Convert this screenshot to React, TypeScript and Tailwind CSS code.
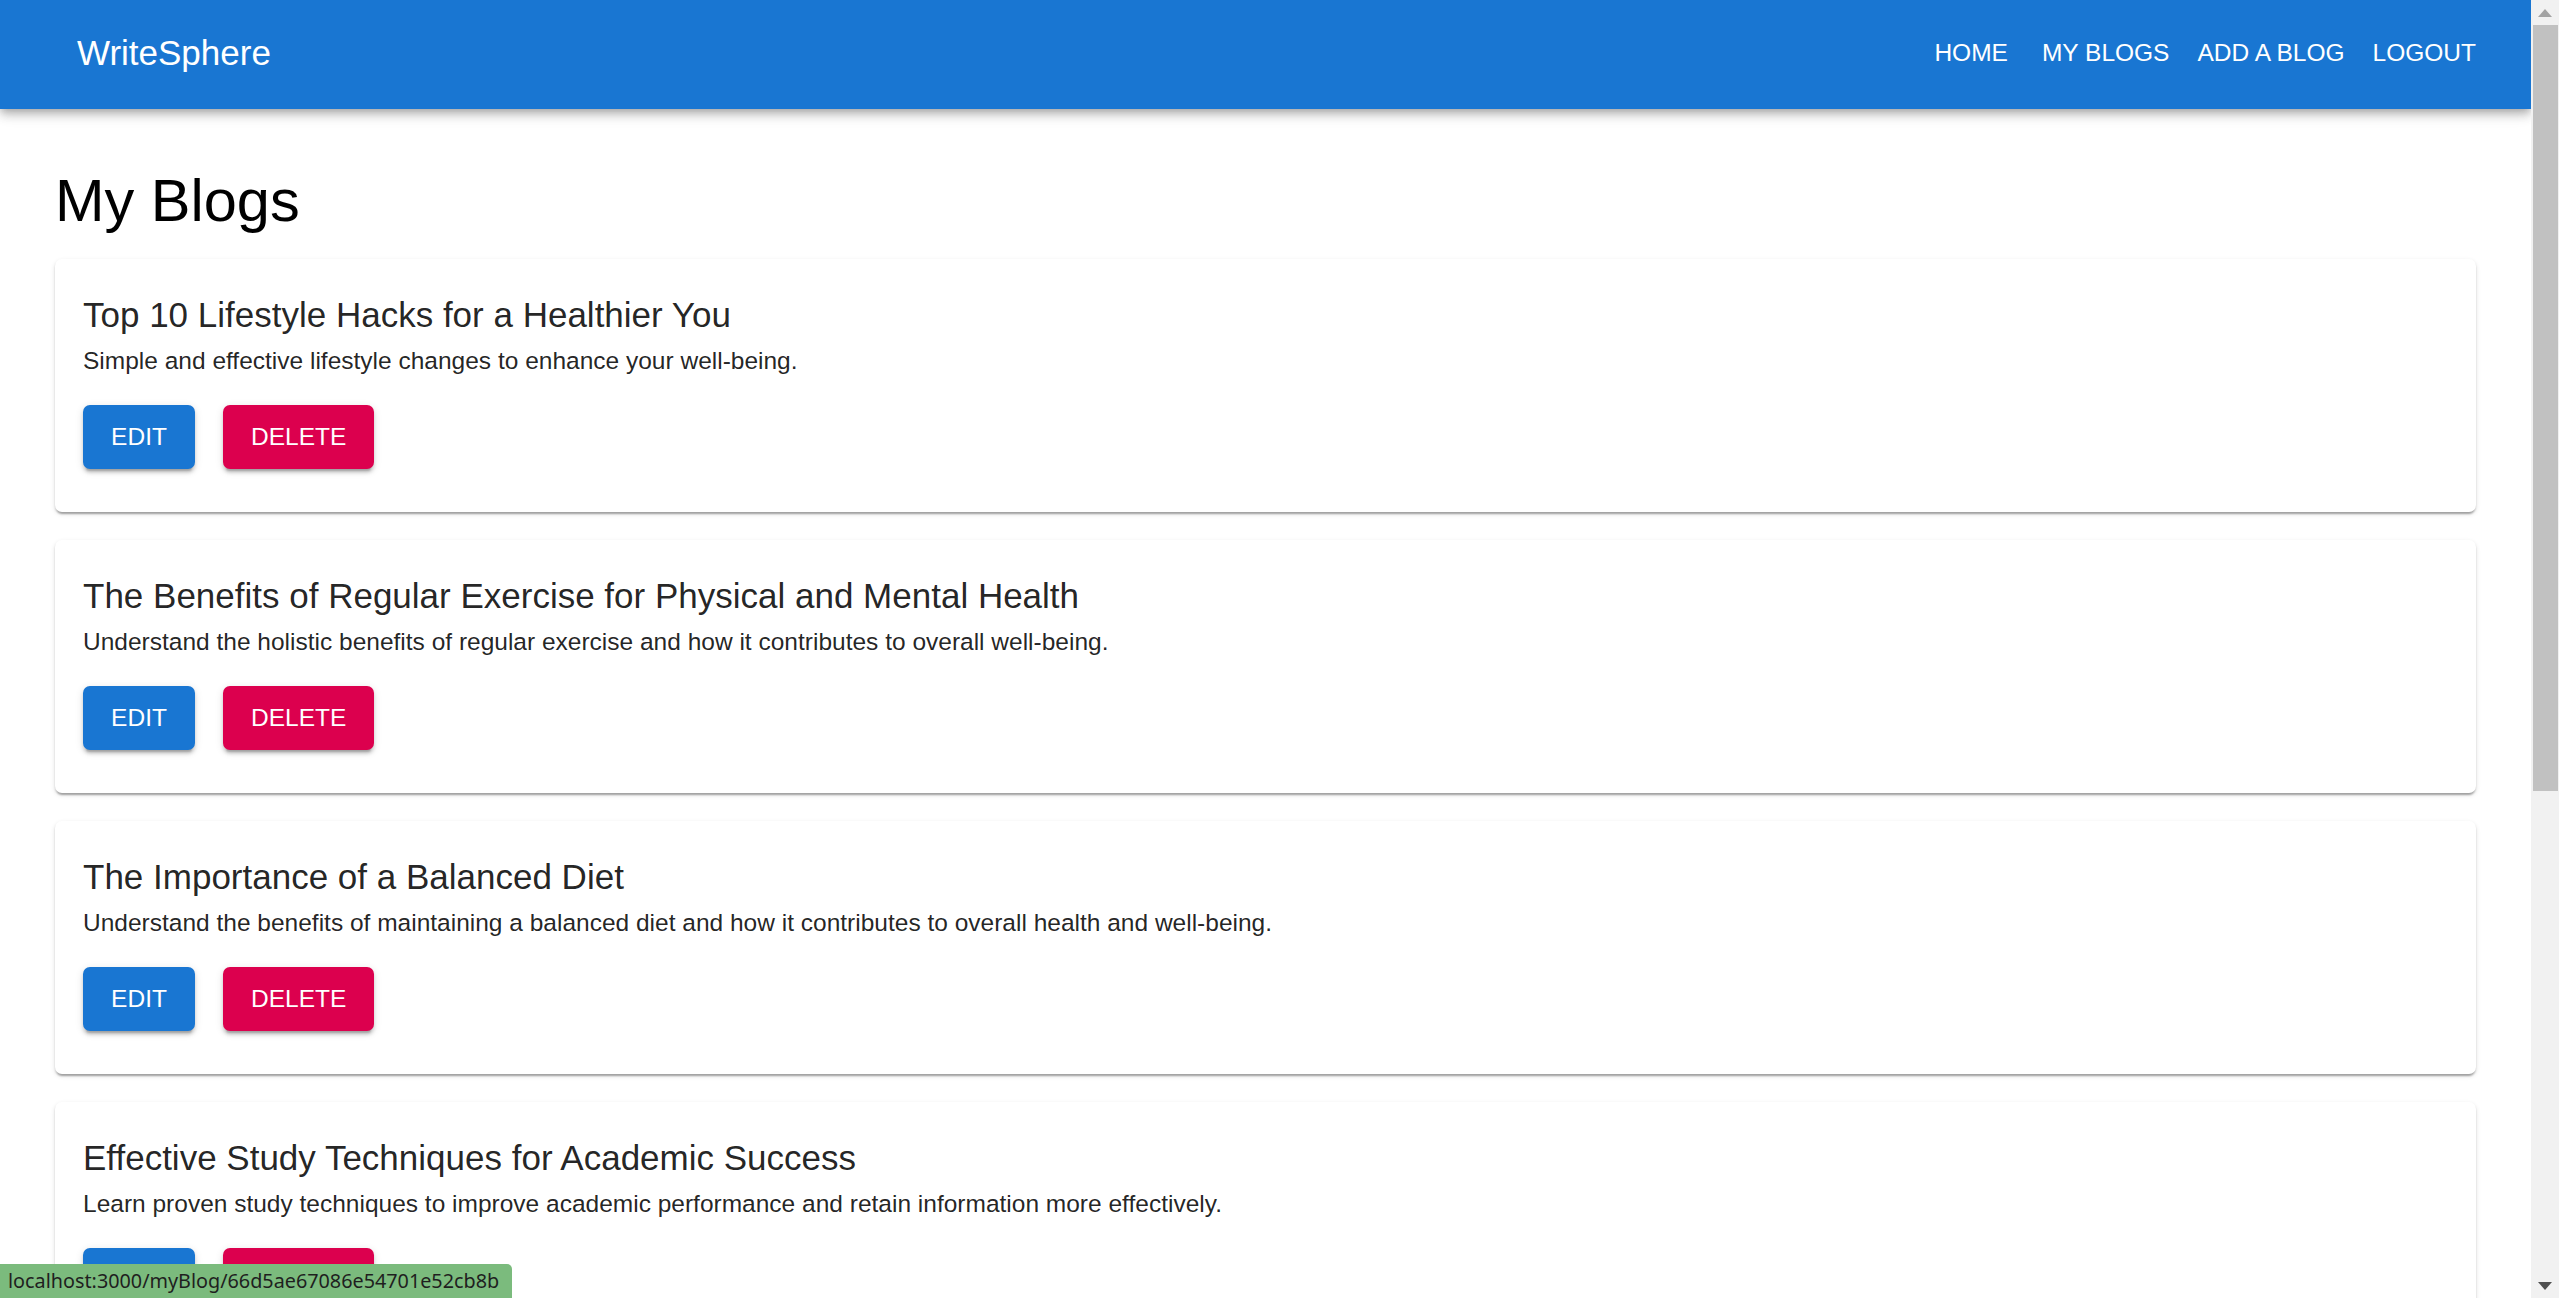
const NAV = ['Home', 'My Blogs', 'Add a Blog', 'Logout'];

const BLOGS = [
  {
    id: '66d5ae67086e54701e52cb8b',
    title: 'Top 10 Lifestyle Hacks for a Healthier You',
    description: 'Simple and effective lifestyle changes to enhance your well-being.',
  },
  {
    id: '66d5ae67086e54701e52cb8c',
    title: 'The Benefits of Regular Exercise for Physical and Mental Health',
    description:
      'Understand the holistic benefits of regular exercise and how it contributes to overall well-being.',
  },
  {
    id: '66d5ae67086e54701e52cb8d',
    title: 'The Importance of a Balanced Diet',
    description:
      'Understand the benefits of maintaining a balanced diet and how it contributes to overall health and well-being.',
  },
  {
    id: '66d5ae67086e54701e52cb8e',
    title: 'Effective Study Techniques for Academic Success',
    description:
      'Learn proven study techniques to improve academic performance and retain information more effectively.',
  },
];

function BlogCard({ title, description }: { title: string; description: string }) {
  return (
    <div className="rounded-[7px] bg-white px-[28px] pt-[28px] pb-[43px] shadow-[0_3.5px_2px_-2px_rgba(0,0,0,0.2),0_2px_2px_0_rgba(0,0,0,0.14),0_2px_5px_0_rgba(0,0,0,0.12)]">
      <h2 className="text-[35px] leading-[56px] font-normal text-[rgba(0,0,0,0.87)]">{title}</h2>
      <p className="text-[24.5px] leading-[35px] text-[rgba(0,0,0,0.87)]">{description}</p>
      <div className="mt-[27px] flex gap-[28px]">
        <button className="min-w-[112px] rounded-[7px] bg-[#1976d2] px-[28px] py-[10.5px] text-[24.5px] leading-[43px] text-white uppercase shadow-[0_5px_2px_-3.5px_rgba(0,0,0,0.2),0_3.5px_3.5px_0_rgba(0,0,0,0.14),0_2px_9px_0_rgba(0,0,0,0.12)]">
          Edit
        </button>
        <button className="min-w-[112px] rounded-[7px] bg-[#dc004e] px-[28px] py-[10.5px] text-[24.5px] leading-[43px] text-white uppercase shadow-[0_5px_2px_-3.5px_rgba(0,0,0,0.2),0_3.5px_3.5px_0_rgba(0,0,0,0.14),0_2px_9px_0_rgba(0,0,0,0.12)]">
          Delete
        </button>
      </div>
    </div>
  );
}

function Scrollbar() {
  return (
    <div className="flex h-full w-[28px] shrink-0 flex-col bg-[#f1f1f1]">
      <div className="flex h-[25px] items-center justify-center">
        <svg width="14" height="8" viewBox="0 0 14 8">
          <polygon points="7,0 14,8 0,8" fill="#a3a3a3" />
        </svg>
      </div>
      <div className="ml-[2px] mr-[1px] h-[766px] bg-[#c1c1c1]" />
      <div className="flex-1" />
      <div className="flex h-[25px] items-center justify-center">
        <svg width="14" height="8" viewBox="0 0 14 8">
          <polygon points="0,0 14,0 7,8" fill="#505050" />
        </svg>
      </div>
    </div>
  );
}

export default function App() {
  return (
    <div className="flex h-screen w-full overflow-hidden bg-white font-['Liberation_Sans',Arial,sans-serif]">
      <div className="flex min-w-0 flex-1 flex-col overflow-hidden">
        <header className="relative z-10 flex h-[109px] shrink-0 items-center justify-between bg-[#1976d2] pb-[4px] pl-[77px] pr-[41px] text-white shadow-[0_3.5px_7px_-2px_rgba(0,0,0,0.2),0_7px_9px_0_rgba(0,0,0,0.14),0_2px_17.5px_0_rgba(0,0,0,0.12)]">
          <div className="text-[35px] leading-[56px]">WriteSphere</div>
          <nav className="flex">
            {NAV.map((item, i) => (
              <a
                key={item}
                className={`px-[14px] py-[10.5px] text-[24.5px] leading-[43px] uppercase ${i === 0 ? 'mr-[6px]' : ''}`}
              >
                {item}
              </a>
            ))}
          </nav>
        </header>
        <main className="px-[55px]">
          <h1 className="mt-[55px] mb-[21px] text-[59.5px] leading-[73.5px] font-normal text-black">My Blogs</h1>
          <div className="flex flex-col gap-[28px]">
            {BLOGS.map(b => (
              <BlogCard key={b.id} title={b.title} description={b.description} />
            ))}
          </div>
        </main>
      </div>
      <Scrollbar />
      <div className="fixed bottom-0 left-0 flex h-[34px] w-[512px] items-center rounded-tr-[5px] bg-[#7bbb7d] pl-[8px] font-['Noto_Sans',sans-serif] text-[19.8px] text-[#1f1f1f]">
        localhost:3000/myBlog/66d5ae67086e54701e52cb8b
      </div>
    </div>
  );
}
